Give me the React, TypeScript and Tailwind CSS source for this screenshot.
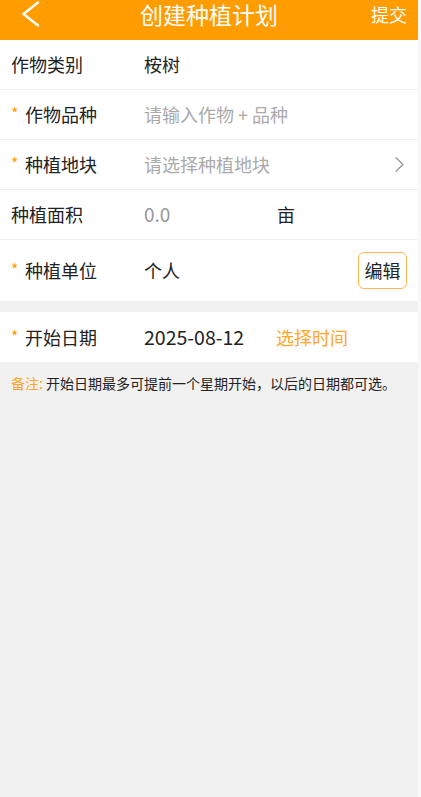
import { ChevronRight } from 'lucide-react';

const font = { fontFamily: '"Noto Sans CJK SC", "Noto Sans", sans-serif' };

function Star() {
  return <span className="w-[14px] text-[#ff9c00] text-[16px] leading-none -mt-[3px]">*</span>;
}

function Row({
  label,
  required,
  children,
  tall,
  last,
}: {
  label: string;
  required?: boolean;
  children: React.ReactNode;
  tall?: boolean;
  last?: boolean;
}) {
  return (
    <div
      className={`flex items-center bg-white pl-[11px] pr-[11px] ${tall ? 'h-[61px]' : 'h-[50px]'} ${
        last ? '' : 'border-b border-[#eeeeee]'
      }`}
    >
      <div className="w-[133px] flex items-center text-[18px] text-[#222]">
        {required && <Star />}
        <span>{label}</span>
      </div>
      <div className="flex-1 flex items-center text-[18px]">{children}</div>
    </div>
  );
}

export default function App() {
  return (
    <div className="min-h-screen flex bg-[#f8f8f8]" style={font}>
      <div className="w-[418px] min-h-screen bg-[#f1f1f1] flex flex-col">
        <div className="h-[40px] bg-[#ff9c00] flex items-start text-white relative">
          <svg className="ml-[21px] mt-[1px]" width="20" height="27" viewBox="0 0 20 27" fill="none">
            <polyline points="17,1.5 2.5,13 17,24.5" stroke="white" strokeWidth="2.4" strokeLinecap="round" strokeLinejoin="round" />
          </svg>
          <div className="absolute left-0 right-0 top-[1px] text-center text-[23px] leading-[26px] pointer-events-none">
            创建种植计划
          </div>
          <div className="ml-auto mr-[11px] mt-[1px] text-[18px] leading-[26px]">提交</div>
        </div>

        <Row label="作物类别">
          <span className="text-[#222]">桉树</span>
        </Row>
        <Row label="作物品种" required>
          <span className="text-[#aaaaaa]">请输入作物 + 品种</span>
        </Row>
        <Row label="种植地块" required>
          <span className="text-[#aaaaaa] flex-1">请选择种植地块</span>
          <ChevronRight className="w-[27px] h-[27px] text-[#9a9a9a] -mr-[6px]" strokeWidth={1.2} />
        </Row>
        <Row label="种植面积">
          <span className="text-[#999] w-[133px] text-[19px]">0.0</span>
          <span className="text-[#222]">亩</span>
        </Row>
        <Row label="种植单位" required tall last>
          <span className="text-[#222] flex-1">个人</span>
          <button className="w-[49px] h-[37px] rounded-[6px] border border-[#ffb84d] text-[18px] text-[#222] flex items-center justify-center">
            编辑
          </button>
        </Row>

        <div className="h-[11px]" />

        <Row label="开始日期" required last>
          <span className="text-[#222] w-[132px] text-[19.5px]">2025-08-12</span>
          <span className="text-[#ffa726]">选择时间</span>
        </Row>

        <div className="px-[11px] pt-[11px] text-[14px] text-[#222]">
          <span className="text-[#ffa726]">备注: </span>
          开始日期最多可提前一个星期开始，以后的日期都可选。
        </div>
      </div>
    </div>
  );
}
